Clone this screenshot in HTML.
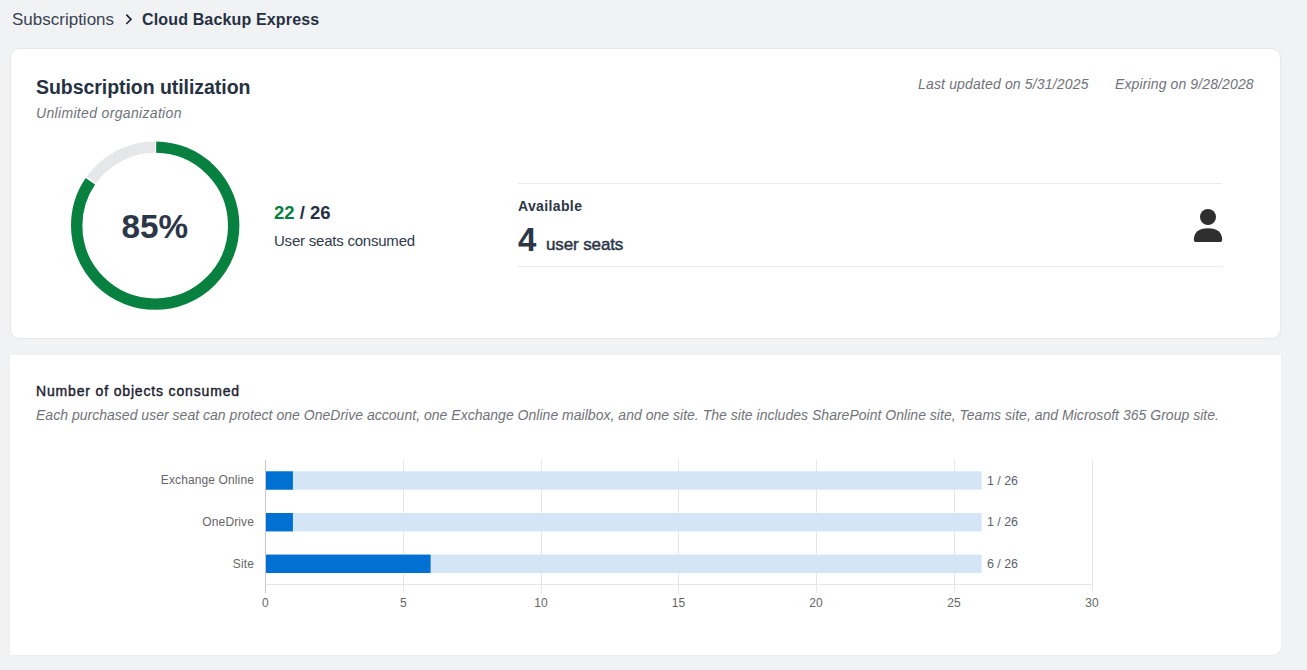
<!DOCTYPE html>
<html><head><meta charset="utf-8">
<style>
*{box-sizing:border-box;margin:0;padding:0}
html,body{width:1307px;height:670px;overflow:hidden;background:#f1f2f4;font-family:"Liberation Sans",sans-serif;color:#2c3646}
.abs{position:absolute;white-space:nowrap}
#bc1{left:12px;top:9.6px;font-size:17px;color:#3a4352}
#bc2{left:142px;top:10.6px;font-size:16px;font-weight:bold;color:#263142;letter-spacing:0.15px}
#chev{position:absolute;left:118px;top:10px}
#card1{position:absolute;left:10px;top:48px;width:1271px;height:291px;background:#fff;border:1px solid #e7e8eb;border-radius:10px}
#card2{position:absolute;left:9px;top:355px;width:1273px;height:301px;background:#fff;border:1px solid #eceef0;border-top:none;border-radius:0 0 10px 0}
#t1{left:36px;top:76px;font-size:19.5px;font-weight:bold;color:#263142;letter-spacing:-0.05px}
#t2{left:36px;top:105px;font-size:14px;font-style:italic;color:#707379;letter-spacing:0.33px}
#d1{left:918px;top:76px;font-size:14px;font-style:italic;color:#707379;letter-spacing:0.16px}
#d2{left:1115px;top:76px;font-size:14px;font-style:italic;color:#707379;letter-spacing:0.12px}
#pct{left:121.5px;top:207.5px;font-size:33.3px;font-weight:bold;color:#2c3646}
#frac{left:274px;top:202px;font-size:18.5px;font-weight:bold;color:#263142}
#frac .g{color:#08803f}
#usc{left:274px;top:232px;font-size:15px;color:#2f3a4a;letter-spacing:-0.22px}
.hl{position:absolute;left:518px;width:704px;height:1px;background:#e8e9ec}
#avl{left:518px;top:198px;font-size:14px;font-weight:bold;color:#2c3646;letter-spacing:0.37px}
#four{left:518px;top:221px;font-size:33px;font-weight:bold;color:#2c3646}
#us{left:546px;top:235px;font-size:17px;font-weight:normal;-webkit-text-stroke:0.45px #2c3646;color:#2c3646;letter-spacing:-0.12px}
#n1{left:36px;top:383px;font-size:14px;font-weight:normal;-webkit-text-stroke:0.4px #1c2130;color:#1c2130;letter-spacing:0.84px}
#n2{left:36px;top:407px;font-size:14px;font-style:italic;color:#707379;letter-spacing:0.02px}
.lbl{position:absolute;font-size:12px;color:#666;white-space:nowrap}
</style></head><body>
<div class="abs" id="bc1">Subscriptions</div>
<svg id="chev" width="22" height="20" viewBox="0 0 22 20"><path d="M8.3 4.6 L13 9.3 L8.3 14" fill="none" stroke="#1f2a3a" stroke-width="1.7"/></svg>
<div class="abs" id="bc2">Cloud Backup Express</div>

<div id="card1"></div>
<div class="abs" id="t1">Subscription utilization</div>
<div class="abs" id="t2">Unlimited organization</div>
<div class="abs" id="d1">Last updated on 5/31/2025</div>
<div class="abs" id="d2">Expiring on 9/28/2028</div>

<svg style="position:absolute;left:0;top:0" width="1307" height="670">
  <!-- donut -->
  <circle cx="155.2" cy="225.6" r="78.5" fill="none" stroke="#e6e7e9" stroke-width="11.4" stroke-dasharray="0 418 74.2 1000" transform="rotate(-90 155.2 225.6)"/>
  <circle cx="155.2" cy="225.6" r="78.5" fill="none" stroke="#08803f" stroke-width="11.4" stroke-dasharray="0 1 415.3 1000" transform="rotate(-90 155.2 225.6)"/>
  <!-- person icon -->
  <circle cx="1208" cy="217" r="8" fill="#2f2f2f"/>
  <path d="M1193.8 240 C1193.8 232.5 1198.5 228.2 1208 228.2 C1217.5 228.2 1222.2 232.5 1222.2 240 Q1222.2 242 1220.2 242 L1195.8 242 Q1193.8 242 1193.8 240 Z" fill="#2f2f2f"/>
</svg>
<div class="abs" id="pct">85%</div>
<div class="abs" id="frac"><span class="g">22</span> / 26</div>
<div class="abs" id="usc">User seats consumed</div>
<div class="hl" style="top:183px"></div>
<div class="hl" style="top:266px"></div>
<div class="abs" id="avl">Available</div>
<div class="abs" id="four">4</div>
<div class="abs" id="us">user seats</div>

<div id="card2"></div>
<div class="abs" id="n1">Number of objects consumed</div>
<div class="abs" id="n2">Each purchased user seat can protect one OneDrive account, one Exchange Online mailbox, and one site. The site includes SharePoint Online site, Teams site, and Microsoft 365 Group site.</div>

<svg style="position:absolute;left:0;top:0" width="1307" height="670">
  <g stroke="#e6e6e6" stroke-width="1">
    <line x1="403.5" y1="460" x2="403.5" y2="593"/>
    <line x1="541.5" y1="460" x2="541.5" y2="593"/>
    <line x1="678.5" y1="460" x2="678.5" y2="593"/>
    <line x1="816.5" y1="460" x2="816.5" y2="593"/>
    <line x1="954.5" y1="460" x2="954.5" y2="593"/>
    <line x1="1092.5" y1="460" x2="1092.5" y2="593"/>
    <line x1="265" y1="584.5" x2="1093" y2="584.5"/>
  </g>
  <line x1="265.5" y1="460" x2="265.5" y2="593" stroke="#c8c8c8"/>
  <g fill="#d4e5f6">
    <rect x="266" y="471.3" width="715.6" height="18.4"/>
    <rect x="266" y="513" width="715.6" height="18.4"/>
    <rect x="266" y="554.6" width="715.6" height="18.4"/>
  </g>
  <g fill="#0070d2">
    <rect x="266" y="471.3" width="26.9" height="18.4"/>
    <rect x="266" y="513" width="26.9" height="18.4"/>
    <rect x="266" y="554.6" width="164.6" height="18.4"/>
  </g>
  <g style="font-family:'Liberation Sans',sans-serif" font-size="12" fill="#666" letter-spacing="0.12">
    <text x="254" y="484" text-anchor="end">Exchange Online</text>
    <text x="254" y="526" text-anchor="end">OneDrive</text>
    <text x="254" y="568" text-anchor="end">Site</text>
    <text x="265.5" y="607" text-anchor="middle">0</text>
    <text x="403.5" y="607" text-anchor="middle">5</text>
    <text x="541" y="607" text-anchor="middle">10</text>
    <text x="678.5" y="607" text-anchor="middle">15</text>
    <text x="816" y="607" text-anchor="middle">20</text>
    <text x="954" y="607" text-anchor="middle">25</text>
    <text x="1092" y="607" text-anchor="middle">30</text>
  </g>
  <g style="font-family:'Liberation Sans',sans-serif" font-size="12.4" fill="#5b6270">
    <text x="987" y="485">1 / 26</text>
    <text x="987" y="526.4">1 / 26</text>
    <text x="987" y="567.8">6 / 26</text>
  </g>
</svg>
</body></html>
